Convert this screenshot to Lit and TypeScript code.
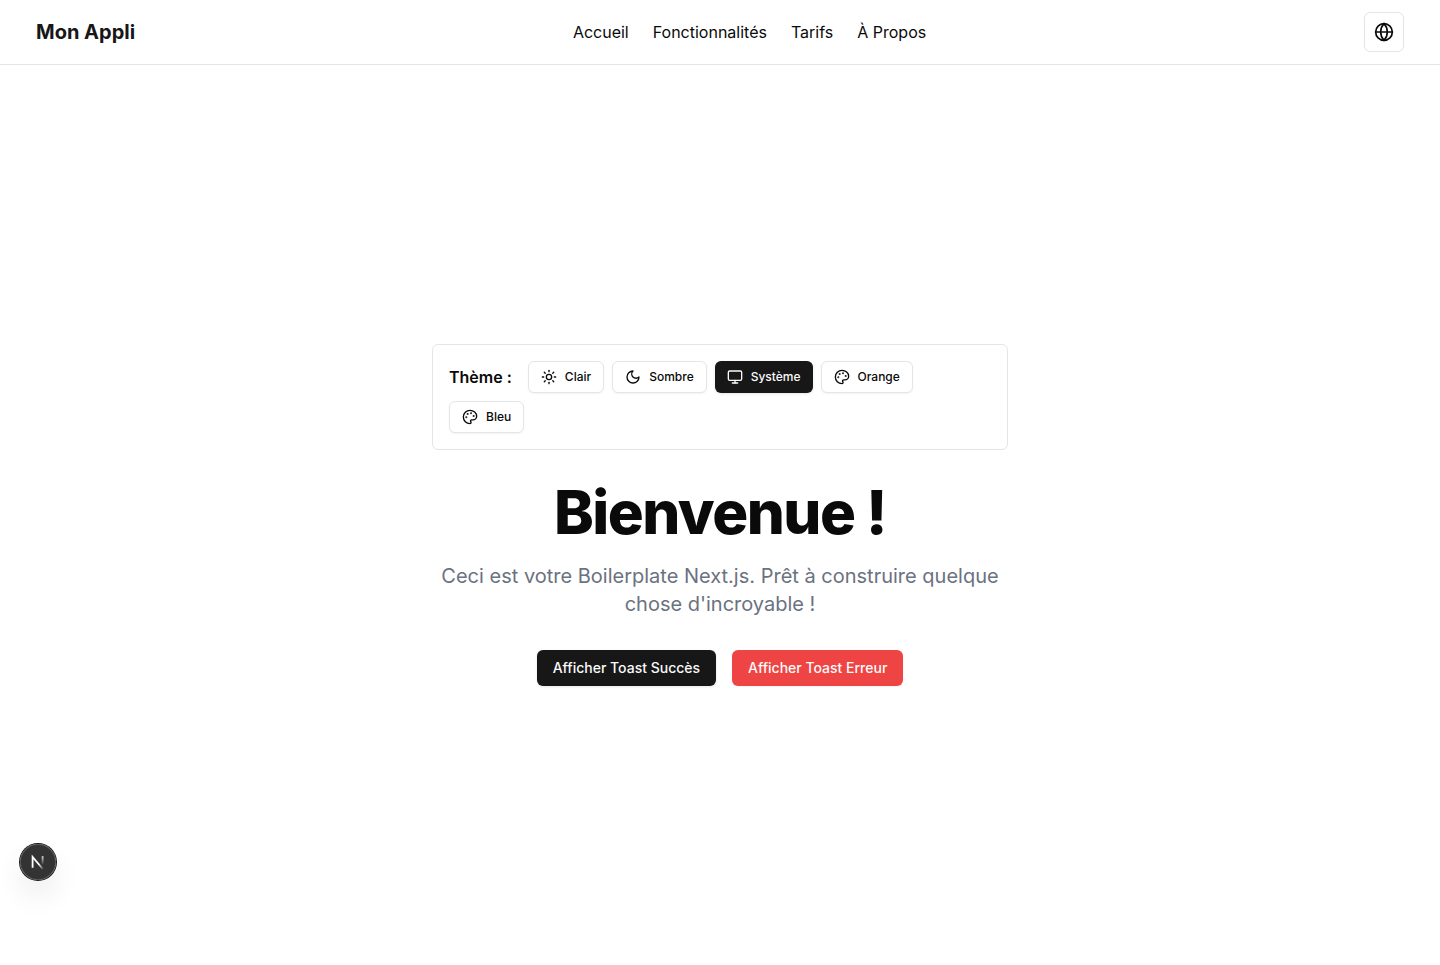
import { LitElement, html, css, svg, nothing } from "lit";
import { customElement, property, state } from "lit/decorators.js";
import { classMap } from "lit/directives/class-map.js";

const icons = {
  globe: svg`<circle cx="12" cy="12" r="10"/><path d="M12 2a14.5 14.5 0 0 0 0 20 14.5 14.5 0 0 0 0-20"/><path d="M2 12h20"/>`,
  sun: svg`<circle cx="12" cy="12" r="4"/><path d="M12 2v2"/><path d="M12 20v2"/><path d="m4.93 4.93 1.41 1.41"/><path d="m17.66 17.66 1.41 1.41"/><path d="M2 12h2"/><path d="M20 12h2"/><path d="m6.34 17.66-1.41 1.41"/><path d="m19.07 4.93-1.41 1.41"/>`,
  moon: svg`<path d="M12 3a6 6 0 0 0 9 9 9 9 0 1 1-9-9Z"/>`,
  monitor: svg`<rect width="20" height="14" x="2" y="3" rx="2"/><path d="M8 21h8"/><path d="M12 17v4"/>`,
  palette: svg`<circle cx="13.5" cy="6.5" r=".5" fill="currentColor"/><circle cx="17.5" cy="10.5" r=".5" fill="currentColor"/><circle cx="8.5" cy="7.5" r=".5" fill="currentColor"/><circle cx="6.5" cy="12.5" r=".5" fill="currentColor"/><path d="M12 2C6.5 2 2 6.5 2 12s4.5 10 10 10c.926 0 1.648-.746 1.648-1.688 0-.437-.18-.835-.437-1.125-.29-.289-.438-.652-.438-1.125a1.64 1.64 0 0 1 1.668-1.668h1.996c3.051 0 5.555-2.503 5.555-5.554C21.965 6.012 17.461 2 12 2z"/>`,
};

type IconName = keyof typeof icons;

@customElement("line-icon")
export class LineIcon extends LitElement {
  @property() name: IconName = "globe";

  static styles = css`
    :host {
      display: block;
      width: 16px;
      height: 16px;
      flex: none;
    }
    .icon {
      display: block;
      width: 100%;
      height: 100%;
      fill: none;
      stroke: currentColor;
      stroke-width: 2;
      stroke-linecap: round;
      stroke-linejoin: round;
    }
  `;

  render() {
    return html`<svg class="icon" viewBox="0 0 24 24" aria-hidden="true">${icons[this.name] ?? nothing}</svg>`;
  }
}

interface Theme {
  id: string;
  label: string;
  icon: IconName;
}

const themes: Theme[] = [
  { id: "light", label: "Clair", icon: "sun" },
  { id: "dark", label: "Sombre", icon: "moon" },
  { id: "system", label: "Système", icon: "monitor" },
  { id: "orange", label: "Orange", icon: "palette" },
  { id: "blue", label: "Bleu", icon: "palette" },
];

const links = ["Accueil", "Fonctionnalités", "Tarifs", "À Propos"];

@customElement("app-root")
export class AppRoot extends LitElement {
  @state() private theme = "system";

  static styles = css`
    :host {
      display: flex;
      flex-direction: column;
      min-height: 100vh;
      background: #ffffff;
      color: #0a0a0a;
      font-family: Inter, "Liberation Sans", sans-serif;
      font-size: 16px;
      line-height: 24px;
      font-optical-sizing: none;
      -webkit-font-smoothing: antialiased;
    }
    * {
      box-sizing: border-box;
    }
    a {
      color: inherit;
      text-decoration: none;
    }
    button {
      display: inline-flex;
      align-items: center;
      justify-content: center;
      margin: 0;
      border: 0;
      border-radius: 6px;
      color: inherit;
      font: inherit;
      font-weight: 500;
      white-space: nowrap;
      cursor: pointer;
    }
    .header {
      border-bottom: 1px solid #e5e5e5;
    }
    .bar {
      display: flex;
      align-items: center;
      justify-content: space-between;
      max-width: 1400px;
      height: 64px;
      margin: 0 auto;
      padding: 0 16px;
    }
    .brand {
      color: #171717;
      font-size: 20px;
      line-height: 28px;
      font-weight: 700;
    }
    .nav {
      display: flex;
      gap: 24px;
    }
    .language {
      width: 40px;
      height: 40px;
      padding: 0;
      border: 1px solid #e5e5e5;
      background: #ffffff;
    }
    .language line-icon {
      width: 20px;
      height: 20px;
    }
    .main {
      display: flex;
      flex: 1;
      align-items: center;
      justify-content: center;
      padding: 16px;
    }
    .content {
      display: flex;
      flex-direction: column;
      gap: 32px;
      width: 100%;
      max-width: 576px;
      text-align: center;
    }
    .themes {
      display: flex;
      flex-wrap: wrap;
      align-items: center;
      gap: 8px;
      padding: 16px;
      border: 1px solid #e5e5e5;
      border-radius: 6px;
    }
    .label {
      margin-right: 8px;
      font-weight: 600;
    }
    .theme {
      gap: 8px;
      height: 32px;
      padding: 0 12px;
      border: 1px solid #e5e5e5;
      background: #ffffff;
      box-shadow: 0 1px 2px rgba(0, 0, 0, 0.05);
      font-size: 12px;
      line-height: 16px;
    }
    .theme.selected {
      border: 0;
      background: #171717;
      color: #fafafa;
      box-shadow: 0 1px 3px rgba(0, 0, 0, 0.1);
    }
    .intro {
      display: flex;
      flex-direction: column;
      gap: 20px;
    }
    .title {
      margin: 0;
      font-size: 60px;
      line-height: 60px;
      font-weight: 800;
      letter-spacing: -0.025em;
    }
    .lead {
      margin: 0;
      color: #6b7280;
      font-size: 20px;
      line-height: 28px;
    }
    .actions {
      display: flex;
      flex-wrap: wrap;
      justify-content: center;
      gap: 16px;
    }
    .action {
      height: 36px;
      padding: 0 16px;
      background: #171717;
      color: #fafafa;
      box-shadow: 0 1px 3px rgba(0, 0, 0, 0.1);
      font-size: 14px;
      line-height: 20px;
    }
    .action.danger {
      background: #ef4444;
      box-shadow: 0 1px 2px rgba(0, 0, 0, 0.05);
    }
    .devtools {
      position: fixed;
      left: 20px;
      bottom: 85px;
      width: 36px;
      height: 36px;
      padding: 0;
      border-radius: 50%;
      background: rgba(0, 0, 0, 0.8);
      box-shadow:
        0 0 0 1px #171717,
        inset 0 0 0 1px rgba(255, 255, 255, 0.14),
        0 16px 32px -8px rgba(0, 0, 0, 0.24);
    }
    .mark {
      flex: none;
      width: 36px;
      height: 36px;
      fill: none;
      stroke-width: 1.8;
    }
  `;

  render() {
    return html`
      <header class="header">
        <div class="bar">
          <a class="brand" href="#">Mon Appli</a>
          <nav class="nav">${links.map((l) => html`<a href="#">${l}</a>`)}</nav>
          <button class="language" type="button" aria-label="Changer de langue">
            <line-icon name="globe"></line-icon>
          </button>
        </div>
      </header>
      <main class="main">
        <div class="content">
          <div class="themes" role="group" aria-labelledby="theme-label">
            <span class="label" id="theme-label">Thème :</span>
            ${themes.map(
              (t) => html`<button
                type="button"
                class=${classMap({ theme: true, selected: t.id === this.theme })}
                aria-pressed=${t.id === this.theme ? "true" : "false"}
                @click=${() => (this.theme = t.id)}
              ><line-icon name=${t.icon}></line-icon>${t.label}</button>`
            )}
          </div>
          <div class="intro">
            <h1 class="title">Bienvenue !</h1>
            <p class="lead">Ceci est votre Boilerplate Next.js. Prêt à construire quelque chose d'incroyable !</p>
          </div>
          <div class="actions">
            <button class="action" type="button">Afficher Toast Succès</button>
            <button class="action danger" type="button">Afficher Toast Erreur</button>
          </div>
        </div>
      </main>
      <button class="devtools" type="button" aria-label="Outils de développement">
        <svg class="mark" viewBox="0 0 36 36" aria-hidden="true">
          <defs>
            <linearGradient id="diagonal" x1="19" y1="20" x2="23.4" y2="25" gradientUnits="userSpaceOnUse">
              <stop stop-color="#fff"/>
              <stop offset="1" stop-color="#fff" stop-opacity="0.1"/>
            </linearGradient>
            <linearGradient id="stem" x1="22" y1="12" x2="22" y2="21" gradientUnits="userSpaceOnUse">
              <stop stop-color="#fff" stop-opacity="0.85"/>
              <stop offset="1" stop-color="#fff" stop-opacity="0"/>
            </linearGradient>
          </defs>
          <path d="M12.6 23.8 V12.9 L22.8 25" stroke="url(#diagonal)"/>
          <path d="M22.6 12.2 V22" stroke="url(#stem)"/>
        </svg>
      </button>
    `;
  }
}
